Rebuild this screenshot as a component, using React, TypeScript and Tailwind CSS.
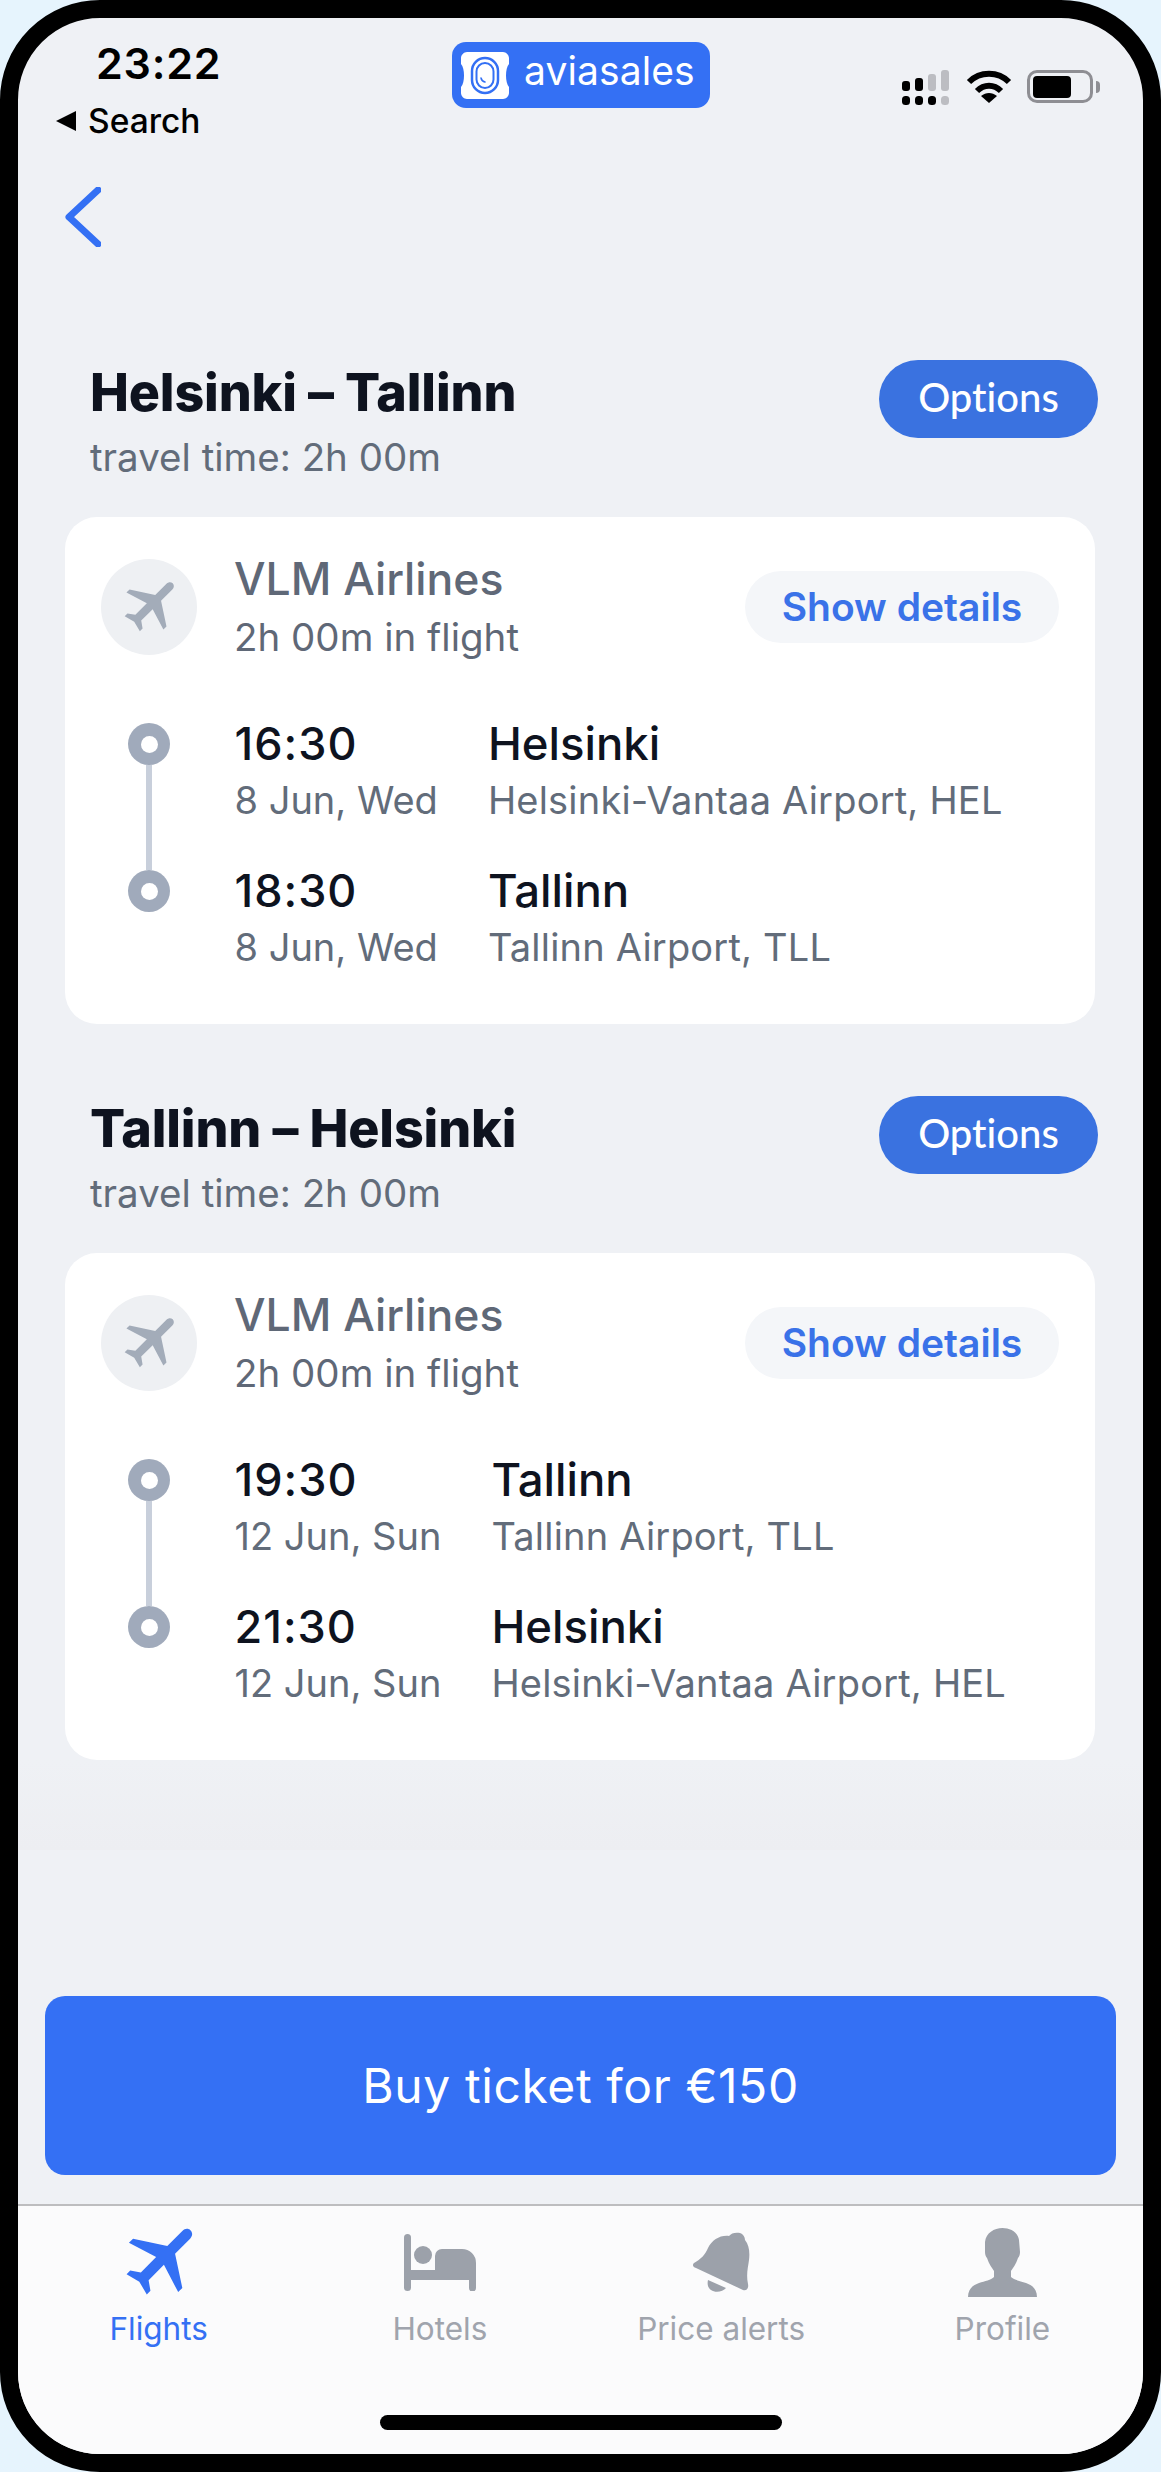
import React from 'react';

interface Stop {
  time: string;
  date: string;
  city: string;
  airport: string;
}

interface Leg {
  title: string;
  stops: Stop[];
}

const legs: Leg[] = [
  {
    title: 'Helsinki – Tallinn',
    stops: [
      { time: '16:30', date: '8 Jun, Wed', city: 'Helsinki', airport: 'Helsinki-Vantaa Airport, HEL' },
      { time: '18:30', date: '8 Jun, Wed', city: 'Tallinn', airport: 'Tallinn Airport, TLL' },
    ],
  },
  {
    title: 'Tallinn – Helsinki',
    stops: [
      { time: '19:30', date: '12 Jun, Sun', city: 'Tallinn', airport: 'Tallinn Airport, TLL' },
      { time: '21:30', date: '12 Jun, Sun', city: 'Helsinki', airport: 'Helsinki-Vantaa Airport, HEL' },
    ],
  },
];

const PlaneIcon = ({ className }: { className: string }) => (
  <svg className={className} viewBox="0 0 24 24" fill="currentColor">
    <path
      transform="translate(1.2 -1.2) rotate(45 12 12)"
      d="M21.5 15.8v-1.6l-8-5.2V3.2C13.5 2.2 12.83 1.5 12 1.5s-1.5.7-1.5 1.7V9l-8 5.2v1.6l8-2.5v5.9l-2.4 1.7v1.4l3.9-1 3.9 1v-1.4l-2.4-1.7v-5.9l8 2.5z"
    />
  </svg>
);

const BedIcon = () => (
  <svg className="h-[57px] w-[72px] text-[#9ca1aa]" viewBox="0 0 72 57" fill="currentColor">
    <rect x="0" y="0" width="7" height="57" rx="3.5" />
    <rect x="0" y="36" width="72" height="10" />
    <circle cx="19" cy="21" r="9" />
    <path d="M31 36V22a7 7 0 0 1 7-7h20a14 14 0 0 1 14 14v25a3.5 3.5 0 0 1-7 0V40H31z" />
  </svg>
);

const BellIcon = () => (
  <svg className="h-[60px] w-[57px] text-[#9ca1aa]" viewBox="0 0 57 60" fill="currentColor">
    <path d="M1 31C8 27 12 23 15 16C19 8 27 3 36 4C38 1 43 0 47 1C50 2 52 5 52 8C56 13 57 20 56 28C55 36 53 42 55 52C56 57 53 59 50 58L3 36C0 35-1 33 1 31Z" />
    <path d="M15 48L33 56C30 60 22 61 18 58C15 56 14 52 15 48Z" />
  </svg>
);

const PersonIcon = () => (
  <svg className="h-[69px] w-[69px] text-[#9ca1aa]" viewBox="0 0 69 69" fill="currentColor">
    <path d="M34.5 0C42 0 50 4 51 12L52 24C52 27 51 29 50 30C48 36 45 40 43 43V49C46 52 52 53 58 55C64 57 69 61 69 69H0C0 61 5 57 11 55C17 53 23 52 26 49V43C24 40 21 36 19 30C18 29 17 27 17 24L17 14C18 5 26 0 34.5 0Z" />
  </svg>
);

const SignalIcon = () => (
  <svg className="h-[35px] w-[47px]" viewBox="0 0 47 35">
    <rect x="0" y="11" width="8" height="10" rx="3" fill="#000" />
    <rect x="13" y="8" width="8" height="13" rx="3" fill="#000" />
    <rect x="26" y="4" width="8" height="17" rx="3" fill="#bcbdc2" />
    <rect x="39" y="0" width="8" height="21" rx="3" fill="#bcbdc2" />
    <rect x="0" y="26" width="8" height="9" rx="3.5" fill="#000" />
    <rect x="13" y="26" width="8" height="9" rx="3.5" fill="#000" />
    <rect x="26" y="26" width="8" height="9" rx="3.5" fill="#000" />
    <rect x="39" y="26" width="8" height="9" rx="3.5" fill="#bcbdc2" />
  </svg>
);

const WifiIcon = () => (
  <svg className="h-[33px] w-[46px]" viewBox="0 0 46 33" fill="none" stroke="#000" strokeWidth="6">
    <path d="M3 12C14 1 32 1 43 12" />
    <path d="M11 21C18 14 28 14 35 21" />
    <path d="M23 33L15 26C20 22 26 22 31 26Z" fill="#000" stroke="none" />
  </svg>
);

const Logo = () => (
  <div className="flex h-[66px] w-[258px] items-center gap-[15px] rounded-[14px] bg-[#3470f4] pl-[9px]">
    <svg className="h-[47px] w-[48px]" viewBox="0 0 48 47">
      <path
        fill="#fff"
        d="M6 0H42C45 0 48 3 48 6V12C44 16 44 31 48 35V41C48 44 45 47 42 47H6C3 47 0 44 0 41V35C4 31 4 16 0 12V6C0 3 3 0 6 0Z"
      />
      <rect x="11" y="6" width="26" height="35" rx="13" fill="none" stroke="#3470f4" strokeWidth="2.5" />
      <rect x="15.5" y="11" width="17" height="25" rx="8.5" fill="none" stroke="#3470f4" strokeWidth="2" />
      <path d="M20 26C20.5 28.5 22 29.5 24 30" fill="none" stroke="#3470f4" strokeWidth="1.5" strokeLinecap="round" />
    </svg>
    <span className="-mt-[10px] text-[39px] leading-none tracking-[0.1px] text-white">aviasales</span>
  </div>
);

const StatusBar = () => (
  <div className="flex h-[169px] items-start">
    <div className="w-[434px] shrink-0 pl-[38px] pt-[22px]">
      <div className="pl-[40px] text-[43px] font-semibold leading-[46px] tracking-[0.8px] text-black">23:22</div>
      <div className="mt-[17px] flex items-center gap-[12px]">
        <span className="h-0 w-0 border-y-[10px] border-r-[20px] border-y-transparent border-r-black" />
        <span className="text-[33.5px] font-medium leading-[36px] text-black">Search</span>
      </div>
    </div>
    <div className="mt-[24px]">
      <Logo />
    </div>
    <div className="ml-[192px] mt-[52px] flex items-start">
      <SignalIcon />
      <div className="ml-[17px]">
        <WifiIcon />
      </div>
      <div className="ml-[15px] flex items-center">
        <div className="flex h-[33px] w-[66px] items-center rounded-[10px] border-[3px] border-[#8e8e93] pl-[3px]">
          <div className="h-[22px] w-[38px] rounded-[4px] bg-black" />
        </div>
        <div className="ml-[3px] h-[12px] w-[4px] rounded-r-full bg-[#8e8e93]" />
      </div>
    </div>
  </div>
);

const TimelineDot = () => (
  <div className="flex h-[42px] w-[42px] items-center justify-center rounded-full bg-[#a0aabb]">
    <div className="h-[17px] w-[17px] rounded-full bg-white" />
  </div>
);

const LegSection = ({ leg }: { leg: Leg }) => (
  <section>
    <div className="flex items-start justify-between pl-[72px] pr-[45px]">
      <div className="pt-[3px]">
        <h2 className="text-[52px] font-extrabold leading-[60px] tracking-[-0.15px] text-[#0e131f]">{leg.title}</h2>
        <p className="mt-[12px] text-[38.5px] leading-[44px] text-[#626c7a]">travel time: 2h 00m</p>
      </div>
      <button className="flex h-[78px] w-[219px] items-center justify-center rounded-full bg-[#3a72e0] pb-[4px] font-['Lato',sans-serif] text-[40px] font-medium text-white [font-variant-ligatures:none]">
        Options
      </button>
    </div>
    <div className="ml-[47px] mr-[48px] mt-[38px] h-[507px] rounded-[32px] bg-white px-[36px] pt-[42px]">
      <div className="flex items-start">
        <div className="flex h-[96px] w-[96px] items-center justify-center rounded-full bg-[#eef0f3]">
          <PlaneIcon className="h-[66px] w-[66px] text-[#a3acb9]" />
        </div>
        <div className="-mt-[5px] ml-[37px]">
          <div className="text-[44.5px] font-medium leading-[50px] text-[#5f6877]">VLM Airlines</div>
          <div className="mt-[10px] text-[38.5px] leading-[46px] text-[#5f6877]">2h 00m in flight</div>
        </div>
        <button className="ml-auto mt-[12px] flex h-[72px] w-[314px] items-center justify-center rounded-full bg-[#f4f6f9] text-[39px] font-semibold text-[#3a72e8]">
          Show details
        </button>
      </div>
      <div className="mt-[63px] flex">
        <div className="ml-[27px] flex w-[42px] shrink-0 flex-col items-center">
          <TimelineDot />
          <div className="h-[105px] w-[6px] bg-[#c8cfdb]" />
          <TimelineDot />
        </div>
        <div className="-mt-[4px] ml-[64.5px] grid grid-cols-[auto_1fr] gap-x-[50px] gap-y-[43px]">
          {leg.stops.map(stop => (
            <React.Fragment key={stop.time}>
              <div>
                <div className="text-[45px] font-medium leading-[50px] tracking-[1px] text-[#0e131f]">{stop.time}</div>
                <div className="mt-[8px] text-[38px] leading-[46px] text-[#626c7a]">{stop.date}</div>
              </div>
              <div>
                <div className="text-[45.5px] font-medium leading-[50px] text-[#0e131f]">{stop.city}</div>
                <div className="mt-[8px] text-[38px] leading-[46px] tracking-[0.2px] text-[#626c7a]">{stop.airport}</div>
              </div>
            </React.Fragment>
          ))}
        </div>
      </div>
    </div>
  </section>
);

const tabs = [
  { label: 'Flights', icon: <PlaneIcon className="h-[88px] w-[88px] text-[#3470f4]" />, active: true },
  { label: 'Hotels', icon: <BedIcon />, active: false },
  { label: 'Price alerts', icon: <BellIcon />, active: false },
  { label: 'Profile', icon: <PersonIcon />, active: false },
];

const TabBar = () => (
  <nav className="relative h-[250px] border-t-2 border-[#bdbdbf] bg-[#fbfbfc]">
    <div className="grid grid-cols-4">
      {tabs.map(tab => (
        <div key={tab.label} className="flex flex-col items-center">
          <div className="flex h-[104px] items-center justify-center pt-[8px]">{tab.icon}</div>
          <span className={`mt-[1px] text-[31.5px] leading-[36px] ${tab.active ? 'text-[#3470f4]' : 'text-[#a0a4ad]'}`}>
            {tab.label}
          </span>
        </div>
      ))}
    </div>
    <div className="absolute bottom-[24px] left-[362px] h-[15px] w-[402px] rounded-full bg-black" />
  </nav>
);

export default function App() {
  return (
    <div className="h-[2472px] w-[1161px] bg-[#e6f4fd] font-['Inter',sans-serif]">
      <div className="flex h-full flex-col overflow-hidden rounded-[100px] border-[18px] border-black bg-[#eff1f5]">
        <StatusBar />
        <div className="ml-[47px] h-[173px]">
          <svg className="h-[60px] w-[36px]" viewBox="0 0 36 60" fill="none" stroke="#3470f4" strokeWidth="7" strokeLinecap="round" strokeLinejoin="round">
            <path d="M33 3L4 30L33 57" />
          </svg>
        </div>
        <div className="flex flex-col gap-[72px]">
          {legs.map(leg => (
            <LegSection key={leg.title} leg={leg} />
          ))}
        </div>
        <div className="h-[90px] shrink-0 bg-gradient-to-b from-[#eff1f5] to-[#edeef2]" />
        <button className="mx-[27px] mb-[29px] mt-auto flex h-[179px] shrink-0 items-center justify-center rounded-[20px] bg-[#3470f4] text-[48px] tracking-[0.6px] text-white">
          Buy ticket for €150
        </button>
        <TabBar />
      </div>
    </div>
  );
}
